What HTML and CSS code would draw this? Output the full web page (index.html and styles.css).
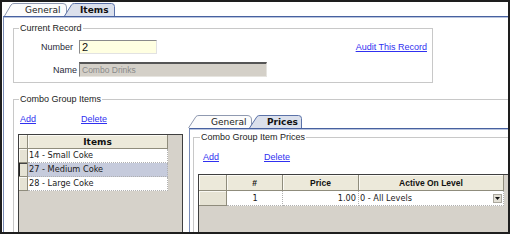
FILE: index.html
```html
<!DOCTYPE html>
<html>
<head>
<meta charset="utf-8">
<link rel="stylesheet" href="styles.css">
</head>
<body>
<div class="frame">
  <div class="tabstrip">
    <div class="tab tab-general">
      <svg class="tab-shape" width="63" height="14" viewBox="0 0 63 14"><path d="M0.5 14 L7 3 Q8 1.5 10 1.5 L59 1.5 Q62.5 1.5 62.5 5 L62.5 14" fill="#fcfcfc" stroke="#8f99b0"/></svg>
      <span class="tab-label">General</span>
    </div>
    <div class="tab tab-items">
      <svg class="tab-shape" width="51" height="14" viewBox="0 0 51 14"><path d="M0.5 14 L7.5 2.8 Q8.4 1.5 10.5 1.5 L47.5 1.5 Q50.5 1.5 50.5 4.5 L50.5 14" fill="#dbe0ec" stroke="#5b72a8"/></svg>
      <span class="tab-label tab-label-sel">Items</span>
    </div>
  </div>
  <div class="panel">
    <div class="group group-current">
      <div class="gtitle">Current Record</div>
      <div class="frow frow-number">
        <span class="flabel">Number</span>
        <div class="input input-number">2</div>
        <a class="link audit" href="#">Audit This Record</a>
      </div>
      <div class="frow frow-name">
        <span class="flabel flabel-name">Name</span>
        <div class="input input-name">Combo Drinks</div>
      </div>
    </div>
    <div class="group group-combo">
      <div class="gtitle">Combo Group Items</div>
      <div class="combo-body">
        <div class="left-col">
          <div class="links links-left"><a class="link link-add" href="#">Add</a><a class="link" href="#">Delete</a></div>
          <div class="grid grid-items">
            <table>
              <colgroup><col class="c-sel-s"><col class="c-items"></colgroup>
              <tr class="hrow hrow-items"><th class="sel"></th><th class="h-items">Items</th></tr>
              <tr class="drow"><td class="sel"></td><td>14 - Small Coke</td></tr>
              <tr class="drow current"><td class="sel"></td><td>27 - Medium Coke</td></tr>
              <tr class="drow"><td class="sel"></td><td>28 - Large Coke</td></tr>
            </table>
          </div>
        </div>
        <div class="right-col">
          <div class="tabstrip tabstrip-inner">
            <div class="tab tab-igeneral">
              <svg class="tab-shape" width="64" height="14" viewBox="0 0 64 14"><path d="M0.5 14 L8 2.5 Q9 1.5 11 1.5 L59 1.5 Q63.5 1.5 63.5 6 L63.5 14" fill="#fcfcfc" stroke="#8f99b0"/></svg>
              <span class="tab-label">General</span>
            </div>
            <div class="tab tab-prices">
              <svg class="tab-shape" width="53" height="14" viewBox="0 0 53 14"><path d="M0.5 14 L8 2.5 Q9 1.5 11 1.5 L49.5 1.5 Q52.5 1.5 52.5 4.5 L52.5 14" fill="#dbe0ec" stroke="#5b72a8"/></svg>
              <span class="tab-label tab-label-sel">Prices</span>
            </div>
          </div>
          <div class="panel panel-inner">
            <div class="group group-prices">
              <div class="gtitle gtitle-inner">Combo Group Item Prices</div>
              <div class="prices-body">
                <div class="links links-right"><a class="link link-add" href="#">Add</a><a class="link" href="#">Delete</a></div>
                <div class="grid grid-prices">
                  <table>
                    <colgroup><col class="c-sel"><col class="c-num"><col class="c-price"><col class="c-level"></colgroup>
                    <tr class="hrow hrow-prices"><th class="sel"></th><th>#</th><th>Price</th><th>Active On Level</th></tr>
                    <tr class="drow drow-prices"><td class="sel"></td><td class="t-center">1</td><td class="t-right">1.00</td><td><div class="combo-cell"><span>0 - All Levels</span><span class="ddbtn"><svg width="5" height="3" viewBox="0 0 5 3"><path d="M0 0 H5 L2.5 3 Z" fill="#111"/></svg></span></div></td></tr>
                  </table>
                </div>
              </div>
            </div>
          </div>
        </div>
      </div>
    </div>
  </div>
</div>
</body>
</html>
```
FILE: styles.css
```css
html, body {
  margin: 0;
  padding: 0;
  background: #fff;
}
body {
  font-family: "Liberation Sans", Arial, sans-serif;
  font-size: 9px;
  color: #222;
}
.frame {
  width: 510px;
  height: 234px;
  box-sizing: border-box;
  border: 2px solid #1e1e1e;
  overflow: hidden;
  background: #fff;
}
.tabstrip {
  display: flex;
  height: 14px;
}
.tab {
  position: relative;
  flex: 0 0 auto;
  height: 14px;
}
.tab-shape {
  position: absolute;
  left: 0;
  top: 0;
  display: block;
}
.tab-label {
  position: relative;
  display: block;
  font-family: "DejaVu Sans", sans-serif;
  font-size: 9px;
  line-height: 14px;
  padding-top: 1px;
  height: 13px;
  color: #222;
  white-space: nowrap;
}
.tab-label-sel {
  font-weight: bold;
  color: #111;
}
.tab-general { width: 63px; margin-left: 2px; }
.tab-general .tab-label { padding-left: 21px; }
.tab-items { width: 51px; margin-left: -3px; }
.tab-items .tab-label { padding-left: 16px; }
.tab-igeneral { width: 64px; }
.tab-igeneral .tab-label { padding-left: 23px; }
.tab-prices { width: 53px; margin-left: -3px; }
.tab-prices .tab-label { padding-left: 18px; }

.panel {
  margin-left: 1px;
  border-left: 1px solid #7a8cb6;
  border-top: 1px solid #4761a0;
  box-shadow: inset 0 1px 0 #b9c4de;
  padding: 11px 0 0 9px;
  height: 400px;
  width: 600px;
}
.group {
  box-sizing: border-box;
  border: 1px solid #c8c8c8;
}
.gtitle {
  width: max-content;
  height: 11px;
  line-height: 11px;
  margin: -6px 0 0 5px;
  padding: 0 1px;
  background: #fff;
  color: #222;
  font-size: 9px;
  white-space: nowrap;
}
.gtitle-inner { margin-left: 6px; }
.group-current {
  width: 420px;
  height: 55px;
}
.frow {
  display: flex;
  align-items: center;
}
.frow-number {
  margin-top: 6px;
  height: 14px;
}
.frow-name {
  margin-top: 8px;
  height: 15px;
}
.flabel {
  width: 59px;
  margin-right: 6px;
  text-align: right;
  color: #2a2a3a;
  font-size: 9px;
}
.flabel-name {
  width: 63px;
  margin-right: 2px;
}
.input {
  box-sizing: border-box;
  padding-left: 2px;
  white-space: nowrap;
}
.input-number {
  width: 78px;
  height: 14px;
  background: #ffffe1;
  border-top: 1px solid #8a8a8a;
  border-left: 1px solid #8a8a8a;
  border-right: 1px solid #e2e2e2;
  border-bottom: 1px solid #e2e2e2;
  font-size: 11px;
  line-height: 12px;
  color: #111;
}
.input-name {
  width: 188px;
  height: 15px;
  background: #d4d0c8;
  border-top: 2px solid #555;
  border-left: 1px solid #808080;
  border-right: 1px solid #e6e4df;
  border-bottom: 1px solid #e6e4df;
  font-size: 8.5px;
  line-height: 12px;
  color: #8b8b8b;
}
.link {
  color: #3030f0;
  text-decoration: underline;
  font-size: 9px;
  line-height: 11px;
}
.audit {
  margin-left: auto;
  margin-right: 5px;
}
.group-combo {
  margin-top: 16px;
  width: 600px;
  height: 300px;
}
.combo-body {
  display: flex;
  align-items: flex-start;
  padding-left: 4px;
}
.left-col {
  width: 165px;
  flex: 0 0 auto;
}
.links {
  display: flex;
  height: 11px;
  margin-top: 9px;
}
.links-left { padding-left: 2px; }
.links-right { padding-left: 5px; }
.link-add {
  display: inline-block;
  width: 61px;
}
.grid {
  box-sizing: border-box;
  border: 1px solid #3f3f3f;
  background: #d6d2ca;
  overflow: hidden;
}
.grid-items {
  margin-top: 9px;
  width: 165px;
  height: 120px;
}
.grid table {
  border-collapse: separate;
  border-spacing: 0;
  table-layout: fixed;
  font-family: "DejaVu Sans", sans-serif;
  font-size: 8.2px;
  color: #1a1a1a;
}
.grid-items table { width: 149px; }
.c-sel-s { width: 9px; }
.c-items { width: 140px; }
.grid th, .grid td {
  padding: 0;
  box-sizing: border-box;
  white-space: nowrap;
  overflow: hidden;
  vertical-align: middle;
}
.grid th {
  background: #ece9da;
  border-right: 1px solid #8f8c7c;
  border-bottom: 1px solid #8f8c7c;
  box-shadow: inset 1px 1px 0 #fbfaf4;
  font-family: "Liberation Sans", Arial, sans-serif;
  font-weight: bold;
  font-size: 8.5px;
  text-align: center;
  color: #111;
}
.grid th.h-items {
  font-family: "DejaVu Sans", sans-serif;
  font-size: 9px;
}
.hrow-items { height: 14px; }
.hrow-prices { height: 16px; }
.drow { height: 14px; }
.drow-prices { height: 15px; }
.grid td {
  background: #fff;
  border-right: 1px dotted #b0b0b0;
  border-bottom: 1px dotted #b0b0b0;
  padding-left: 1px;
  line-height: 11px;
}
.grid td.sel {
  background: #e6e3d4;
  border-right: 1px solid #8f8c7c;
  border-bottom: 1px solid #8f8c7c;
  box-shadow: inset 1px 1px 0 #faf9f3;
  padding: 0;
}
.drow.current td {
  background: #c6cbdc;
}
.drow.current td.sel {
  background: #e6e3d4;
  box-shadow: inset 1px 0 0 #222, inset 0 1px 0 #444;
}
.t-center { text-align: center; }
.grid td.t-right { text-align: right; padding-right: 2px; }
.right-col {
  margin-left: 5px;
  margin-top: 9px;
  width: 340px;
  flex: 0 0 auto;
}
.panel-inner {
  padding: 8px 0 0 3px;
  width: 400px;
  height: 200px;
}
.group-prices {
  width: 400px;
  height: 200px;
}
.prices-body {
  padding-left: 4px;
}
.grid-prices {
  margin-top: 11px;
  width: 330px;
  height: 120px;
}
.grid-prices table { width: 305px; }
.c-sel { width: 28px; }
.c-num { width: 56px; }
.c-price { width: 76px; }
.c-level { width: 145px; }
.combo-cell {
  display: flex;
  align-items: center;
}
.ddbtn {
  margin-left: auto;
  margin-right: 1px;
  width: 9px;
  height: 9px;
  box-sizing: border-box;
  border: 1px solid #a9a69c;
  background: #e2dfd5;
  display: flex;
  align-items: center;
  justify-content: center;
}
.ddbtn svg { display: block; }
```
